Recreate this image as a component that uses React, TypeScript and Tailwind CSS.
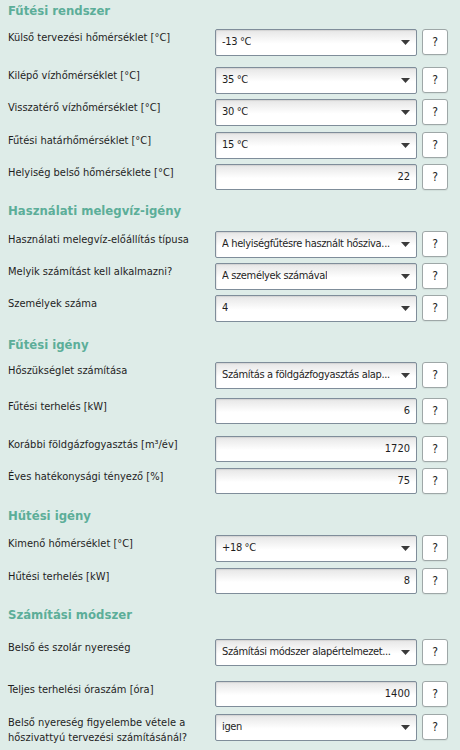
import { ReactNode } from 'react';

type Row = {
  label: ReactNode;
  value: string;
  kind: 'select' | 'input';
  mt: string;
};

type Section = {
  title: string;
  mt: string;
  rows: Row[];
};

const SECTIONS: Section[] = [
  {
    title: 'Fűtési rendszer',
    mt: 'mt-[3px]',
    rows: [
      { label: 'Külső tervezési hőmérséklet [°C]', value: '-13 °C', kind: 'select', mt: 'mt-[10px]' },
      { label: 'Kilépő vízhőmérséklet [°C]', value: '35 °C', kind: 'select', mt: 'mt-[11px]' },
      { label: 'Visszatérő vízhőmérséklet [°C]', value: '30 °C', kind: 'select', mt: 'mt-[5px]' },
      { label: 'Fűtési határhőmérséklet [°C]', value: '15 °C', kind: 'select', mt: 'mt-[6px]' },
      { label: 'Helyiség belső hőmérséklete [°C]', value: '22', kind: 'input', mt: 'mt-[5px]' },
    ],
  },
  {
    title: 'Használati melegvíz-igény',
    mt: 'mt-[13px]',
    rows: [
      { label: 'Használati melegvíz-előállítás típusa', value: 'A helyiségfűtésre használt hősziva...', kind: 'select', mt: 'mt-[12px]' },
      { label: 'Melyik számítást kell alkalmazni?', value: 'A személyek számával', kind: 'select', mt: 'mt-[5px]' },
      { label: 'Személyek száma', value: '4', kind: 'select', mt: 'mt-[5px]' },
    ],
  },
  {
    title: 'Fűtési igény',
    mt: 'mt-[15px]',
    rows: [
      { label: 'Hőszükséglet számítása', value: 'Számítás a földgázfogyasztás alap...', kind: 'select', mt: 'mt-[9px]' },
      { label: 'Fűtési terhelés [kW]', value: '6', kind: 'input', mt: 'mt-[9px]' },
      { label: 'Korábbi földgázfogyasztás [m³/év]', value: '1720', kind: 'input', mt: 'mt-[12px]' },
      { label: 'Éves hatékonysági tényező [%]', value: '75', kind: 'input', mt: 'mt-[6px]' },
    ],
  },
  {
    title: 'Hűtési igény',
    mt: 'mt-[14px]',
    rows: [
      { label: 'Kimenő hőmérséklet [°C]', value: '+18 °C', kind: 'select', mt: 'mt-[11px]' },
      { label: 'Hűtési terhelés [kW]', value: '8', kind: 'input', mt: 'mt-[6px]' },
    ],
  },
  {
    title: 'Számítási módszer',
    mt: 'mt-[13px]',
    rows: [
      { label: 'Belső és szolár nyereség', value: 'Számítási módszer alapértelmezet...', kind: 'select', mt: 'mt-[16px]' },
      { label: 'Teljes terhelési óraszám [óra]', value: '1400', kind: 'input', mt: 'mt-[15px]' },
      {
        label: (
          <>
            Belső nyereség figyelembe vétele a
            <br />
            hőszivattyú tervezési számításánál?
          </>
        ),
        value: 'igen',
        kind: 'select',
        mt: 'mt-[7px]',
      },
    ],
  },
];

function Caret() {
  return (
    <svg width="9" height="5" viewBox="0 0 9 5" className="shrink-0 ml-1">
      <path d="M0 0h9L4.5 5z" fill="#3a3a3a" />
    </svg>
  );
}

function Field({ row }: { row: Row }) {
  if (row.kind === 'select') {
    return (
      <div className="w-[202px] h-[27px] flex items-center justify-between pl-[6px] pr-[6px] border border-[#7f8d9a] rounded-[2px] bg-linear-to-b from-[#e6e6e6] to-white to-[55%] shadow-[inset_1px_1px_1px_rgba(0,0,0,0.08)]">
        <span className="whitespace-nowrap overflow-hidden tracking-[-0.35px] text-[#1e1e1e]">{row.value}</span>
        <Caret />
      </div>
    );
  }
  return (
    <div className="w-[202px] h-[26px] flex items-center justify-end pr-[6px] border border-[#7f8d9a] rounded-[2px] bg-linear-to-b from-[#e6e6e6] to-white to-[55%] shadow-[inset_1px_1px_1px_rgba(0,0,0,0.08)]">
      <span className="text-[#1e1e1e]">{row.value}</span>
    </div>
  );
}

export default function App() {
  return (
    <div
      className="w-[460px] h-[750px] overflow-hidden bg-[#deece8] text-[11px] text-[#1e1e1e]"
      style={{ fontFamily: '"DejaVu Sans Condensed", "DejaVu Sans", Verdana, sans-serif' }}
    >
      {SECTIONS.map((s) => (
        <div key={s.title}>
          <h2 className={`${s.mt} pl-2 h-[16px] leading-[16px] text-[13px] font-bold text-[#5cae99]`}>{s.title}</h2>
          {s.rows.map((r, i) => (
            <div key={i} className={`${r.mt} flex items-start`}>
              <div className="w-[215px] pl-2 pr-2 leading-[15px] pt-[1px]">{r.label}</div>
              <Field row={r} />
              <button className="ml-[5px] w-[26px] h-[26px] flex items-center justify-center bg-white border border-[#9ea7a7] rounded-[3px] text-[12px] text-[#222] shadow-[0_1px_1px_rgba(0,0,0,0.06)]">
                ?
              </button>
            </div>
          ))}
        </div>
      ))}
    </div>
  );
}
